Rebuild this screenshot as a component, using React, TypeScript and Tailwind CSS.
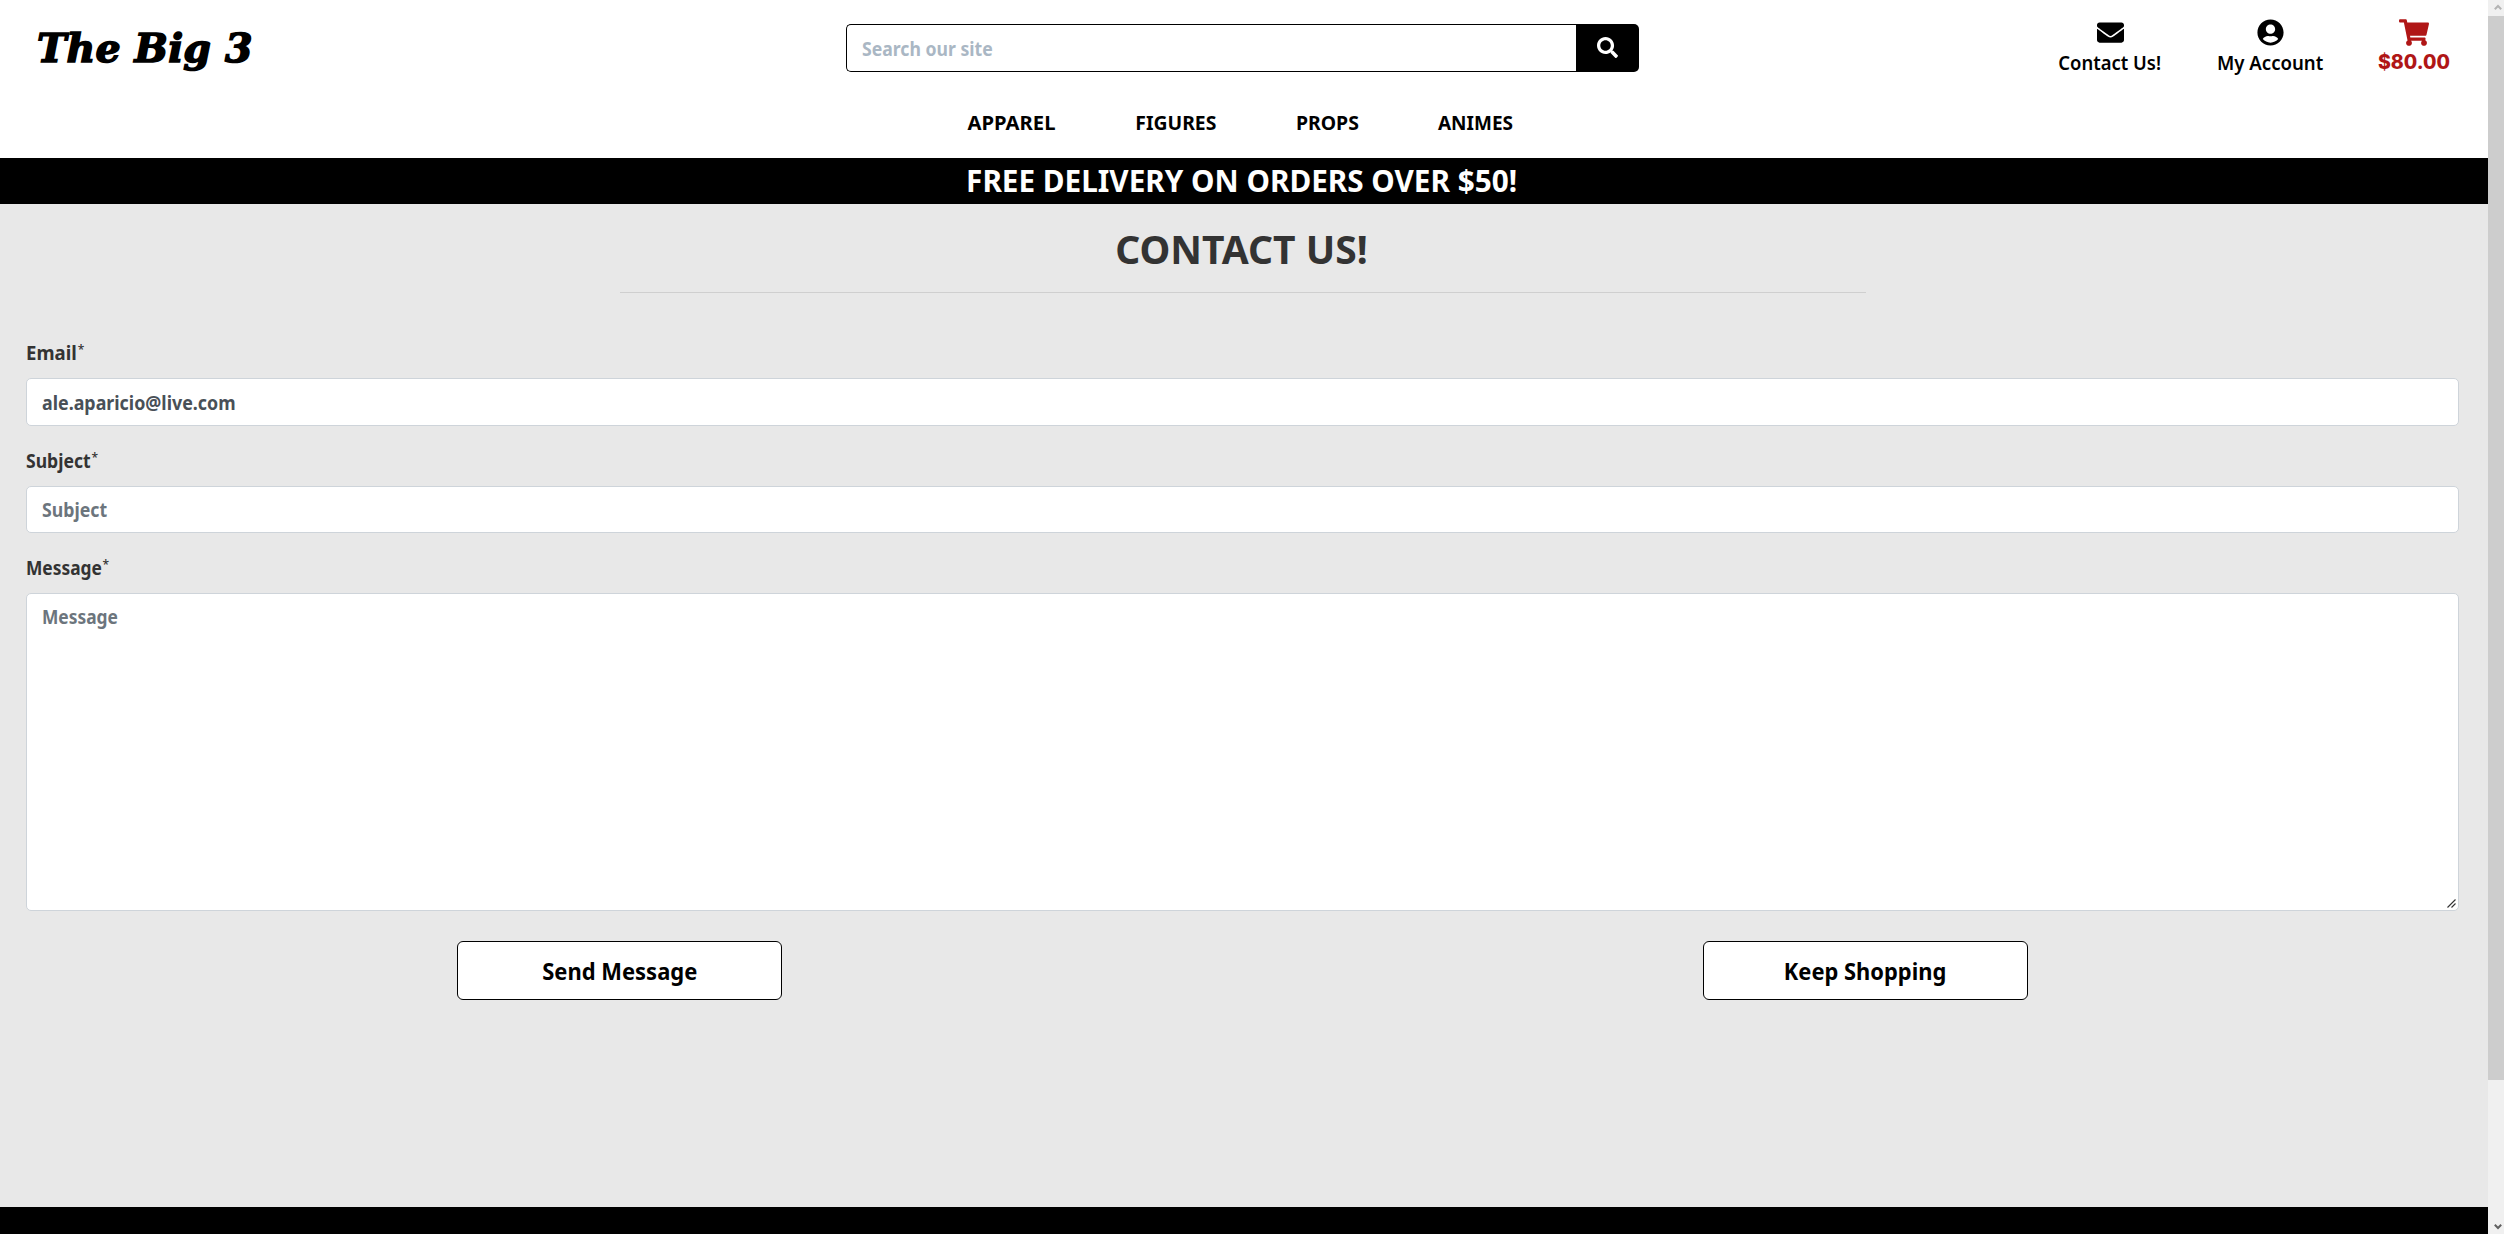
import type { ReactNode } from "react";
import { FaEnvelope, FaSearch, FaShoppingCart, FaUserCircle } from "react-icons/fa";

const categories = [
  { label: "APPAREL", box: "w-[88px]", fit: "scale-x-[1.01]" },
  { label: "FIGURES", box: "w-[80px]", fit: "scale-x-[0.968]" },
  { label: "PROPS", box: "w-[62px]", fit: "scale-x-[0.972]" },
  { label: "ANIMES", box: "w-[75px]", fit: "scale-x-[0.95]" },
];

function AccountLink({ icon, label, className }: { icon: ReactNode; label: ReactNode; className: string }) {
  return (
    <a className={`flex flex-col items-center ${className}`}>
      <span className="flex h-7 items-center">{icon}</span>
      <span className="mt-[3px] flex h-7 items-center whitespace-nowrap">{label}</span>
    </a>
  );
}

function FieldLabel({ children, className }: { children: string; className: string }) {
  return (
    <label className="flex h-7 items-center pt-0.5 text-[20px] font-bold text-[#333]">
      <span className={`flex origin-left ${className}`}>{children}</span>
      <span className="-mt-[7px] text-[12px] font-medium">*</span>
    </label>
  );
}

function ScrollBar() {
  return (
    <div className="flex w-4 shrink-0 flex-col bg-[#f0f0f0]">
      <div className="flex h-4 items-center justify-center">
        <svg width="8" height="7" viewBox="0 0 8 7" className="-mt-px ml-[3px]">
          <path d="M0.8 5.2 4 2 7.2 5.2" fill="none" stroke="#b4b4b4" strokeWidth="2" />
        </svg>
      </div>
      <div className="h-[1064px] bg-[#cdcdcd]" />
      <div className="mt-auto flex h-4 items-center justify-center">
        <svg width="8" height="7" viewBox="0 0 8 7" className="ml-[3px]">
          <path d="M0.8 1.8 4 5 7.2 1.8" fill="none" stroke="#606060" strokeWidth="2" />
        </svg>
      </div>
    </div>
  );
}

export default function App() {
  return (
    <div className="flex h-[1234px] w-[2504px] overflow-hidden bg-[#e8e8e8] font-['Noto_Sans',sans-serif]">
      <div className="flex w-[2488px] flex-col">
        <header className="h-[158px] bg-white text-black">
          <div className="flex h-24 items-center">
            <a className="w-[846px] pt-0.5 pl-[37px] font-['DejaVu_Serif',serif] text-[39.5px] leading-none font-bold tracking-[0.15px] whitespace-nowrap italic [-webkit-text-stroke:1.6px_black]">
              The Big 3
            </a>
            <form className="flex h-12 w-[793px]">
              <div className="flex flex-1 items-center rounded-l-[5px] border border-r-0 border-black pt-0.5 pl-[15px] text-[20px] font-bold text-[#aab7c4]">
                <span className="origin-left scale-x-[0.882]">Search our site</span>
              </div>
              <button type="button" className="flex w-[63px] items-center justify-center rounded-r-[5px] bg-black text-white">
                <FaSearch size={21} className="-mt-px" />
              </button>
            </form>
            <nav className="ml-[411px] flex h-24 gap-[40px] pt-[18px] text-[20px] font-semibold">
              <AccountLink
                className="w-[120px]"
                icon={<FaEnvelope size={27} />}
                label={<span className="scale-x-[0.922]">Contact Us!</span>}
              />
              <AccountLink
                className="w-[121px]"
                icon={<FaUserCircle size={27} />}
                label={<span className="scale-x-[0.931]">My Account</span>}
              />
              <AccountLink
                className="w-[86px] text-[#b01616]"
                icon={<FaShoppingCart size={27} className="h-[27px] w-[30px]" />}
                label={<span className="font-['Inter',sans-serif] text-[19.5px] font-extrabold">$80.00</span>}
              />
            </nav>
          </div>
          <nav className="flex h-[54px] items-center justify-start gap-[80px] pl-[968px] text-[20px] font-bold">
            {categories.map((c) => (
              <a key={c.label} className={`flex justify-center ${c.box}`}>
                <span className={c.fit}>{c.label}</span>
              </a>
            ))}
          </nav>
        </header>

        <div className="flex h-[46px] items-center justify-center bg-black pr-1 pb-px text-[31px] leading-none font-bold whitespace-nowrap text-white">
          <span className="scale-x-[0.958]">FREE DELIVERY ON ORDERS OVER $50!</span>
        </div>

        <main className="flex h-[1003px] flex-col">
          <h1 className="ml-[620px] flex h-[89px] w-[1246px] items-center justify-center border-b border-[#cfcfcf] pr-[3px] text-[39px] leading-none font-bold whitespace-nowrap text-[#333]">
            <span>CONTACT US!</span>
          </h1>
          <form className="flex w-[2459px] flex-col pt-[45px] pl-[26px] text-[20px] font-bold">
            <FieldLabel className="-mr-[3px] scale-x-[0.93]">Email</FieldLabel>
            <div className="mt-3 flex h-12 items-center rounded-[5px] border border-[#ced4da] bg-white pt-px pl-[15px] text-[#495057]">
              <span className="origin-left scale-x-[0.892]">ale.aparicio@live.com</span>
            </div>
            <div className="mt-5">
              <FieldLabel className="-mr-2 scale-x-[0.878]">Subject</FieldLabel>
            </div>
            <div className="mt-3 flex h-[47px] items-center rounded-[5px] border border-[#ced4da] bg-white pl-[15px] text-[#6c757d]">
              <span className="origin-left scale-x-[0.885]">Subject</span>
            </div>
            <div className="mt-5">
              <FieldLabel className="-mr-[11px] scale-x-[0.868]">Message</FieldLabel>
            </div>
            <div className="mt-3 flex h-[318px] justify-between rounded-[5px] border border-[#ced4da] bg-white pt-2 pr-0.5 pb-0.5 pl-[15px] text-[#6c757d]">
              <span className="origin-left scale-x-[0.868] self-start">Message</span>
              <svg width="9" height="9" viewBox="0 0 9 9" className="self-end" stroke="#333" strokeWidth="1.1">
                <path d="M0.5 8.5 8.5 0.5M4.5 8.5 8.5 4.5" />
              </svg>
            </div>
          </form>
          <div className="mt-[30px] flex justify-between pr-[460px] pl-[457px] text-[24px] font-bold text-black">
            <button type="button" className="flex h-[59px] w-[325px] items-center justify-center rounded-[6px] border border-black bg-white">
              <span className="scale-x-[0.915]">Send Message</span>
            </button>
            <button type="button" className="flex h-[59px] w-[325px] items-center justify-center rounded-[6px] border border-black bg-white">
              <span className="scale-x-[0.912]">Keep Shopping</span>
            </button>
          </div>
        </main>
        <footer className="flex-1 bg-black" />
      </div>
      <ScrollBar />
    </div>
  );
}
